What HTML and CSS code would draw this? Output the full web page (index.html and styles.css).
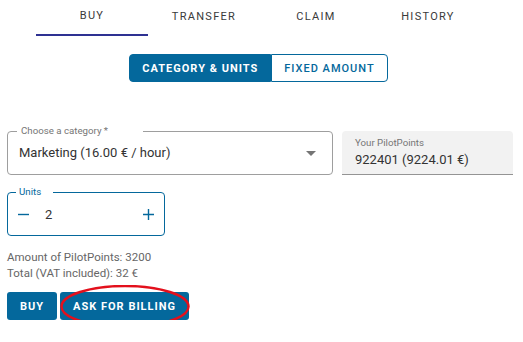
FILE: index.html
```html
<!DOCTYPE html>
<html lang="en">
<head>
  <meta charset="UTF-8" />
  <meta name="viewport" content="width=device-width, initial-scale=1" />
  <title>PilotPoints</title>
  <link rel="stylesheet" href="styles.css">
</head>
<body>
  <div class="page">
    <nav class="tabs">
      <div class="tab active">BUY</div>
      <div class="tab">TRANSFER</div>
      <div class="tab">CLAIM</div>
      <div class="tab">HISTORY</div>
    </nav>

    <div class="toggle">
      <button class="toggle-btn selected">CATEGORY &amp; UNITS</button>
      <button class="toggle-btn">FIXED AMOUNT</button>
    </div>

    <div class="field-row">
      <fieldset class="outlined category">
        <legend>Choose a category *</legend>
        <div class="select">
          <span>Marketing (16.00 € / hour)</span>
          <span class="arrow"></span>
        </div>
      </fieldset>

      <div class="filled">
        <div class="filled-label">Your PilotPoints</div>
        <div class="filled-value">922401 (9224.01 €)</div>
      </div>
    </div>

    <fieldset class="outlined units">
      <legend>Units</legend>
      <div class="stepper">
        <svg class="step" viewBox="0 0 11 11"><path d="M0 5.5h11" /></svg>
        <span class="count">2</span>
        <svg class="step plus" viewBox="0 0 11 11"><path d="M0 5.5h11M5.5 0v11" /></svg>
      </div>
    </fieldset>

    <div class="summary">
      <div>Amount of PilotPoints: 3200</div>
      <div>Total (VAT included): 32 €</div>
    </div>

    <div class="actions">
      <button class="btn">BUY</button>
      <span class="highlight">
        <button class="btn">ASK FOR BILLING</button>
        <!-- red mark drawn around the billing button -->
        <svg class="circle" viewBox="0 0 132 44"><ellipse cx="65" cy="21.5" rx="63.5" ry="20.5" /></svg>
      </span>
    </div>
  </div>
</body>
</html>
```

FILE: styles.css
```css
:root {
  --primary: #04689c;
  --text: #333333;
  --muted: #757575;
  --border: #9e9e9e;
}

* {
  margin: 0;
  padding: 0;
  box-sizing: border-box;
}

body {
  font-family: Roboto, "Liberation Sans", sans-serif;
  background: #ffffff;
  color: var(--text);
}

.page {
  padding: 0 10px 0 7px;
}

/* Tabs */
.tabs {
  display: flex;
  width: 448px;
  margin: 0 auto;
}

.tab {
  flex: 1;
  text-align: center;
  font-size: 11px;
  letter-spacing: 1.3px;
  line-height: 34px;
  border-bottom: 2px solid transparent;
  color: #3a3a3a;
}

.tab.active {
  border-bottom-color: #2e3192;
  line-height: 32px;
  padding-bottom: 2px;
}

/* Mode toggle */
.toggle {
  display: flex;
  justify-content: center;
  margin-top: 18px;
  padding-right: 3px;
}

.toggle-btn {
  font-family: inherit;
  font-size: 11px;
  letter-spacing: 1px;
  height: 28px;
  padding: 0 12px;
  border: 1px solid var(--primary);
  background: #ffffff;
  color: var(--primary);
  border-radius: 0 4px 4px 0;
  font-weight: 500;
}

.toggle-btn.selected {
  background: var(--primary);
  color: #ffffff;
  font-weight: 700;
  border-radius: 4px 0 0 4px;
}

/* Fields */
.field-row {
  display: flex;
  align-items: flex-start;
  gap: 9px;
  margin-top: 43px;
}

.outlined {
  border: 1px solid var(--border);
  border-radius: 4px;
}

.outlined legend {
  font-size: 9.7px;
  line-height: 12px;
  color: var(--muted);
}

.category {
  width: 326px;
}

.category legend {
  margin-left: 9px;
  padding: 0 35px 0 4px;
}

.select {
  display: flex;
  align-items: center;
  justify-content: space-between;
  height: 30px;
  margin-bottom: 7px;
  padding: 0 16px 0 11px;
  font-size: 13px;
  color: var(--text);
}

.arrow {
  width: 0;
  height: 0;
  border-left: 5px solid transparent;
  border-right: 5px solid transparent;
  border-top: 5px solid var(--muted);
  margin-top: 2px;
}

.filled {
  flex: 1;
  margin-top: 6px;
  height: 44px;
  background: #f2f2f2;
  border-bottom: 1px solid #949494;
  border-radius: 4px 4px 0 0;
  padding: 6px 0 0 13px;
}

.filled-label {
  font-size: 9.7px;
  line-height: 12px;
  color: var(--muted);
}

.filled-value {
  font-size: 13px;
  line-height: 18px;
  margin-top: 2px;
  color: var(--text);
}

.units {
  width: 158px;
  margin-top: 11px;
  border-color: var(--primary);
}

.units legend {
  margin-left: 8px;
  padding: 0 12px 0 3px;
  color: var(--primary);
}

.stepper {
  display: flex;
  align-items: center;
  height: 32px;
  margin-bottom: 5px;
  padding: 0 10px 0 10px;
}

.step {
  width: 11px;
  height: 11px;
  stroke: var(--primary);
  stroke-width: 1.4;
  fill: none;
}

.count {
  margin-left: 16px;
  font-size: 13px;
}

.plus {
  margin-left: auto;
}

/* Summary */
.summary {
  margin-top: 13px;
  font-size: 11.5px;
  line-height: 16px;
  color: #666666;
}

/* Actions */
.actions {
  display: flex;
  gap: 3px;
  margin-top: 11px;
}

.btn {
  font-family: inherit;
  font-size: 11px;
  font-weight: 700;
  letter-spacing: 1px;
  height: 28px;
  padding: 0 13px;
  border: none;
  border-radius: 3px;
  background: var(--primary);
  color: #ffffff;
}

.highlight {
  position: relative;
  display: inline-flex;
}

.circle {
  position: absolute;
  left: 0;
  top: -7px;
  width: 132px;
  height: 44px;
  fill: none;
  stroke: #e3101c;
  stroke-width: 2.5;
}
```
